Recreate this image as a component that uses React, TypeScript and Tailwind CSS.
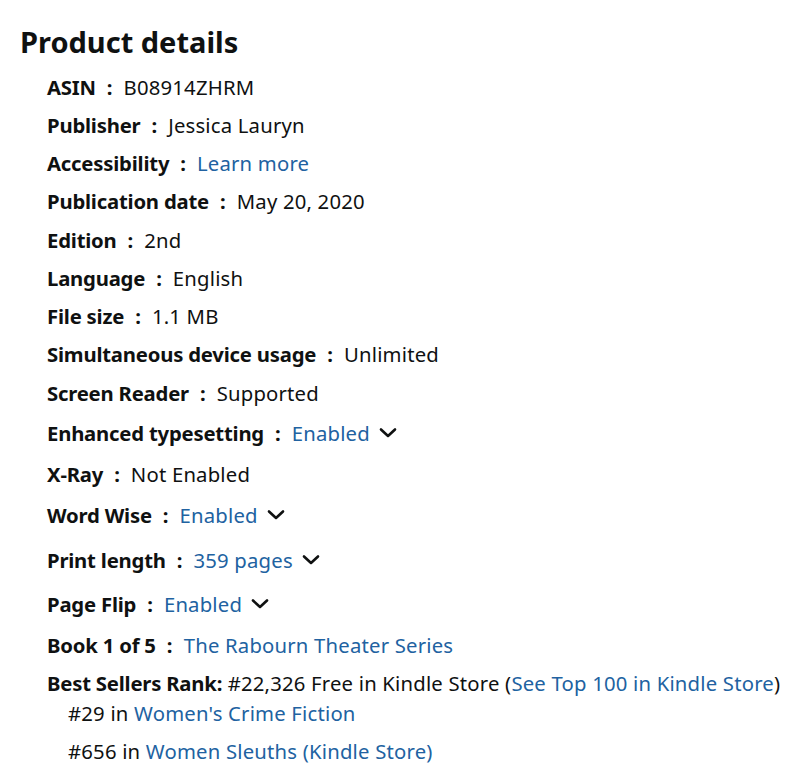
import React from 'react';

const Chevron = () => (
  <svg width="18" height="12" viewBox="0 0 18 12" className="ml-[9px] inline-block">
    <path d="M2 2.5 L9 9 L16 2.5" fill="none" stroke="#0f1111" strokeWidth="2.6" strokeLinecap="round" strokeLinejoin="round" />
  </svg>
);

type Row = { label: string; value: string; link?: boolean; chevron?: boolean; h: string };

const rows: Row[] = [
  { label: 'ASIN', value: 'B08914ZHRM', h: 'h-[38px]' },
  { label: 'Publisher', value: 'Jessica Lauryn', h: 'h-[38px]' },
  { label: 'Accessibility', value: 'Learn more', link: true, h: 'h-[38px]' },
  { label: 'Publication date', value: 'May 20, 2020', h: 'h-[39px]' },
  { label: 'Edition', value: '2nd', h: 'h-[38px]' },
  { label: 'Language', value: 'English', h: 'h-[38px]' },
  { label: 'File size', value: '1.1 MB', h: 'h-[38px]' },
  { label: 'Simultaneous device usage', value: 'Unlimited', h: 'h-[39px]' },
  { label: 'Screen Reader', value: 'Supported', h: 'h-[40px]' },
  { label: 'Enhanced typesetting', value: 'Enabled', link: true, chevron: true, h: 'h-[41px]' },
  { label: 'X-Ray', value: 'Not Enabled', h: 'h-[41px]' },
  { label: 'Word Wise', value: 'Enabled', link: true, chevron: true, h: 'h-[45px]' },
  { label: 'Print length', value: '359 pages', link: true, chevron: true, h: 'h-[44px]' },
  { label: 'Page Flip', value: 'Enabled', link: true, chevron: true, h: 'h-[41px]' },
];

export default function App() {
  return (
    <div className="w-[811px] h-[769px] bg-white text-[#0f1111] font-['Noto_Sans',sans-serif] overflow-hidden">
      <h2 className="pl-[20px] pt-[22px] text-[29px] font-bold leading-[40px]">Product details</h2>
      <ul className="pl-[47px] mt-[11px]">
        {rows.map((r) => (
          <li key={r.label} className={`${r.h} flex items-start text-[20.3px] leading-[28px]`}>
            <span className="font-bold tracking-[-0.2px]">{r.label}</span>
            <span className="font-bold mx-[11px]">:</span>
            <span className={`tracking-[0.2px] ${r.link ? 'text-[#2162a1]' : ''}`}>{r.value}</span>
            {r.chevron && <span className="h-[28px] flex items-center"><Chevron /></span>}
          </li>
        ))}
      </ul>
      <div className="pl-[47px] text-[20.3px] leading-[28px] tracking-[0.2px]">
        <div className="h-[38px] flex">
          <span className="font-bold tracking-[-0.2px]">Book 1 of 5</span>
          <span className="font-bold mx-[11px]">:</span>
          <span className="text-[#2162a1]">The Rabourn Theater Series</span>
        </div>
        <div className="h-[30px]">
          <span className="font-bold tracking-[-0.2px]">Best Sellers Rank:</span> #22,326 Free in Kindle Store (
          <span className="text-[#2162a1]">See Top 100 in Kindle Store</span>)
        </div>
        <ul className="pl-[21px]">
          <li className="h-[38px]">#29 in <span className="text-[#2162a1]">Women's Crime Fiction</span></li>
          <li className="h-[38px]">#656 in <span className="text-[#2162a1]">Women Sleuths (Kindle Store)</span></li>
        </ul>
      </div>
    </div>
  );
}
